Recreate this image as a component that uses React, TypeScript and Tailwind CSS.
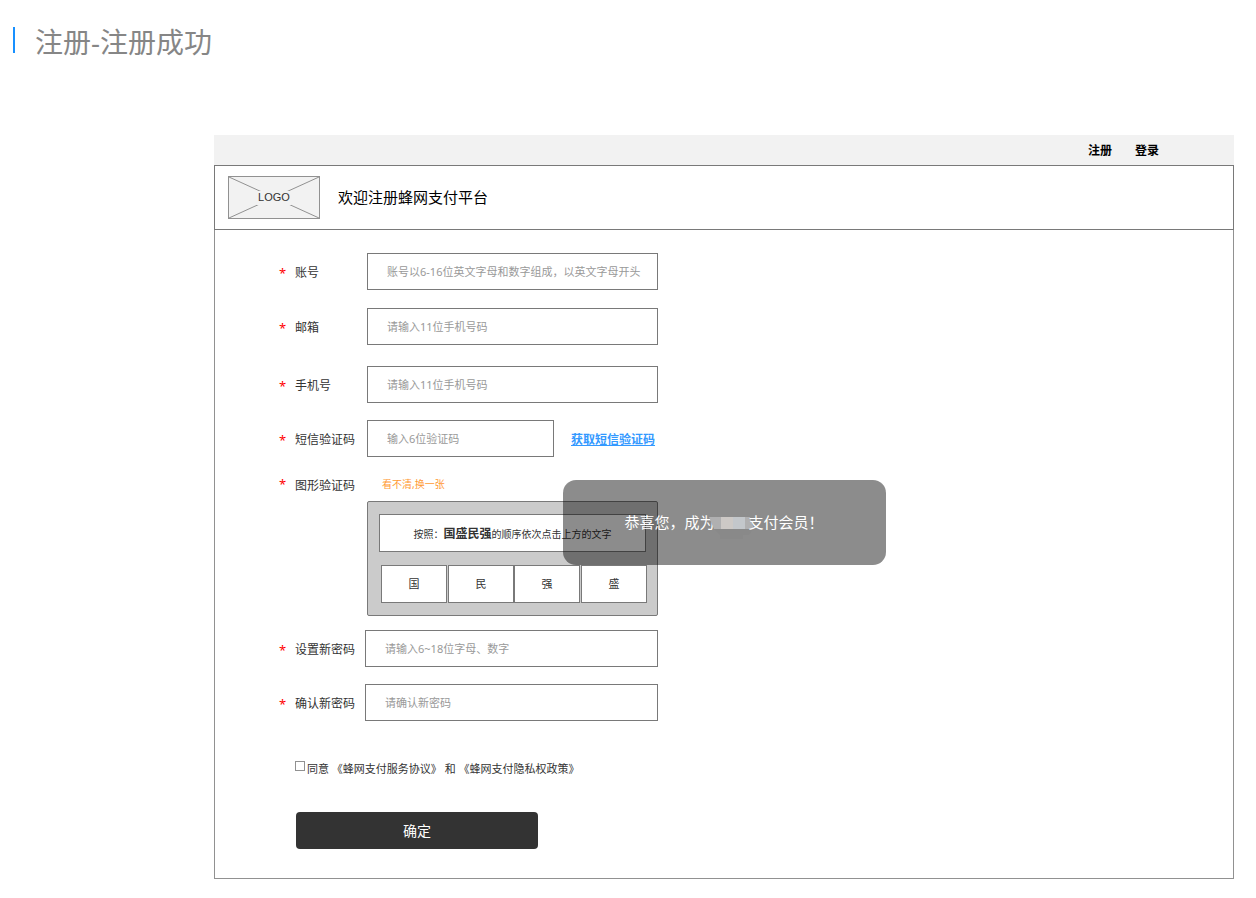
import { ReactNode } from 'react';

interface FieldProps {
    id: string;
    label: string;
    placeholder: string;
    type?: string;
    wide?: boolean;
    narrow?: boolean;
    className?: string;
    children?: ReactNode;
}

function Required() {
    return <span className="w-4 shrink-0 pt-0.5 text-[13px] leading-4 text-[#ff0000]">*</span>;
}

function Field({ id, label, placeholder, type = 'text', wide, narrow, className = '', children }: FieldProps) {
    return (
        <div className={`flex items-center ${className}`}>
            <Required />
            <label htmlFor={id} className={`shrink-0 pt-0.5 text-xs text-[#333333] ${wide ? 'w-[70px]' : 'w-[72px]'}`}>
                {label}
            </label>
            <input
                id={id}
                type={type}
                placeholder={placeholder}
                className={`h-[37px] border border-[#797979] bg-white pr-2 pl-[19px] text-[11px] text-[#333333] outline-none placeholder:text-[#999999] ${
                    narrow ? 'w-[187px]' : wide ? 'w-[293px]' : 'w-[291px]'
                }`}
            />
            {children}
        </div>
    );
}

function Logo() {
    return (
        <svg width="92" height="43" viewBox="0 0 92 43" role="img" aria-label="LOGO">
            <rect x="0.5" y="0.5" width="91" height="42" fill="#f2f2f2" stroke="#919191" />
            <path d="M1 1L91 42M1 42L91 1" stroke="#919191" />
            <rect x="29" y="15" width="34" height="14" fill="#f2f2f2" />
            <text x="46" y="25" textAnchor="middle" fontSize="11" fill="#333333" fontFamily="Liberation Sans, sans-serif">
                LOGO
            </text>
        </svg>
    );
}

// Masked brand name inside the success message
function MaskedName() {
    return (
        <svg width="34" height="26" viewBox="0 0 34 26" className="shrink-0 overflow-visible" aria-hidden="true">
            <path d="M-6 7H35L39 19H-1Z" fill="#b0b0b1" />
            <rect x="6" y="7" width="12" height="12" fill="#cdc9c6" />
            <rect x="18" y="7" width="12" height="12" fill="#c3c7cb" />
            <path d="M-1 19H38L34 25H28V29H5V25Z" fill="#898989" />
        </svg>
    );
}

function Captcha() {
    return (
        <div className="mt-[17px] flex items-start">
            <Required />
            <span className="w-[72px] shrink-0 pt-0.5 text-xs leading-5 text-[#333333]">图形验证码</span>
            <div>
                <button type="button" className="mb-[9px] ml-[15px] block h-[18px] pt-0.5 text-[10px] text-[#ff9933]">
                    看不清,换一张
                </button>
                <div className="w-[291px] rounded-xs border border-[#797979] bg-[#cbcbcb] px-[11px] py-3">
                    <p className="flex h-[38px] items-center justify-center border border-[#797979] bg-white pt-0.5 text-[10px] text-[#333333]">
                        按照：<b className="text-xs">国盛民强</b>的顺序依次点击上方的文字
                    </p>
                    <div className="mt-[13px] ml-0.5 flex">
                        {['国', '民', '强', '盛'].map((char) => (
                            <button
                                key={char}
                                type="button"
                                className="h-[38px] w-[66px] shrink-0 border border-[#797979] bg-white text-[11px] text-[#333333] odd:mr-px"
                            >
                                {char}
                            </button>
                        ))}
                    </div>
                </div>
            </div>
        </div>
    );
}

export default function App() {
    return (
        <div className="min-h-screen bg-white pb-[19px] font-['Noto_Sans','Noto_Sans_CJK_SC',sans-serif]">
            <div className="flex items-start pt-[27px] pl-[13px]">
                <span className="h-[26px] w-0.5 bg-[#1890ff]" />
                <h1 className="ml-5 text-[28px] leading-[30px] text-[#868686]">注册-注册成功</h1>
            </div>

            <div className="mt-[78px] mr-[22px] ml-[214px]">
                <nav className="flex h-[30px] items-center justify-end gap-[23px] bg-[#f2f2f2] pt-0.5 pr-[75px] text-xs font-bold text-black">
                    <a href="#register">注册</a>
                    <a href="#login">登录</a>
                </nav>

                <header className="flex h-[65px] items-center gap-[18px] border border-[#797979] px-[13px]">
                    <Logo />
                    <h2 className="text-[15px] text-black">欢迎注册蜂网支付平台</h2>
                </header>

                <main className="relative border border-t-0 border-[#919191] pt-[23px] pb-[29px] pl-16">
                    <form onSubmit={(e) => e.preventDefault()}>
                        <Field id="account" label="账号" placeholder="账号以6-16位英文字母和数字组成，以英文字母开头" />
                        <Field id="email" label="邮箱" placeholder="请输入11位手机号码" className="mt-[18px]" />
                        <Field id="phone" label="手机号" placeholder="请输入11位手机号码" className="mt-[21px]" />
                        <Field id="sms" label="短信验证码" placeholder="输入6位验证码" narrow className="mt-[17px]">
                            <a href="#sms" className="ml-[17px] pt-0.5 text-xs font-bold text-[#3399ff] underline">
                                获取短信验证码
                            </a>
                        </Field>

                        <Captcha />

                        <Field id="password" type="password" label="设置新密码" placeholder="请输入6~18位字母、数字" wide className="mt-3.5" />
                        <Field id="confirm" type="password" label="确认新密码" placeholder="请确认新密码" wide className="mt-[17px]" />

                        <label className="mt-[38px] ml-4 flex h-5 items-start text-[11px] leading-5 text-[#333333]">
                            <input type="checkbox" className="mt-0.5 mr-0.5 size-2.5 appearance-none border border-[#919191] bg-white checked:bg-[#333333]" />
                            <span>同意 《蜂网支付服务协议》 和 《蜂网支付隐私权政策》</span>
                        </label>

                        <button type="submit" className="mt-[33px] ml-[17px] block h-[37px] w-[242px] rounded bg-[#333333] text-sm text-white">
                            确定
                        </button>
                    </form>

                    {/* Success toast */}
                    <div
                        role="status"
                        className="absolute inset-x-0 top-[250px] mx-auto flex h-[85px] w-[323px] items-center justify-center rounded-[13px] bg-black/45 text-[15px] text-white"
                    >
                        <span>恭喜您，成为</span>
                        <MaskedName />
                        <span>支付会员！</span>
                    </div>
                </main>
            </div>
        </div>
    );
}
